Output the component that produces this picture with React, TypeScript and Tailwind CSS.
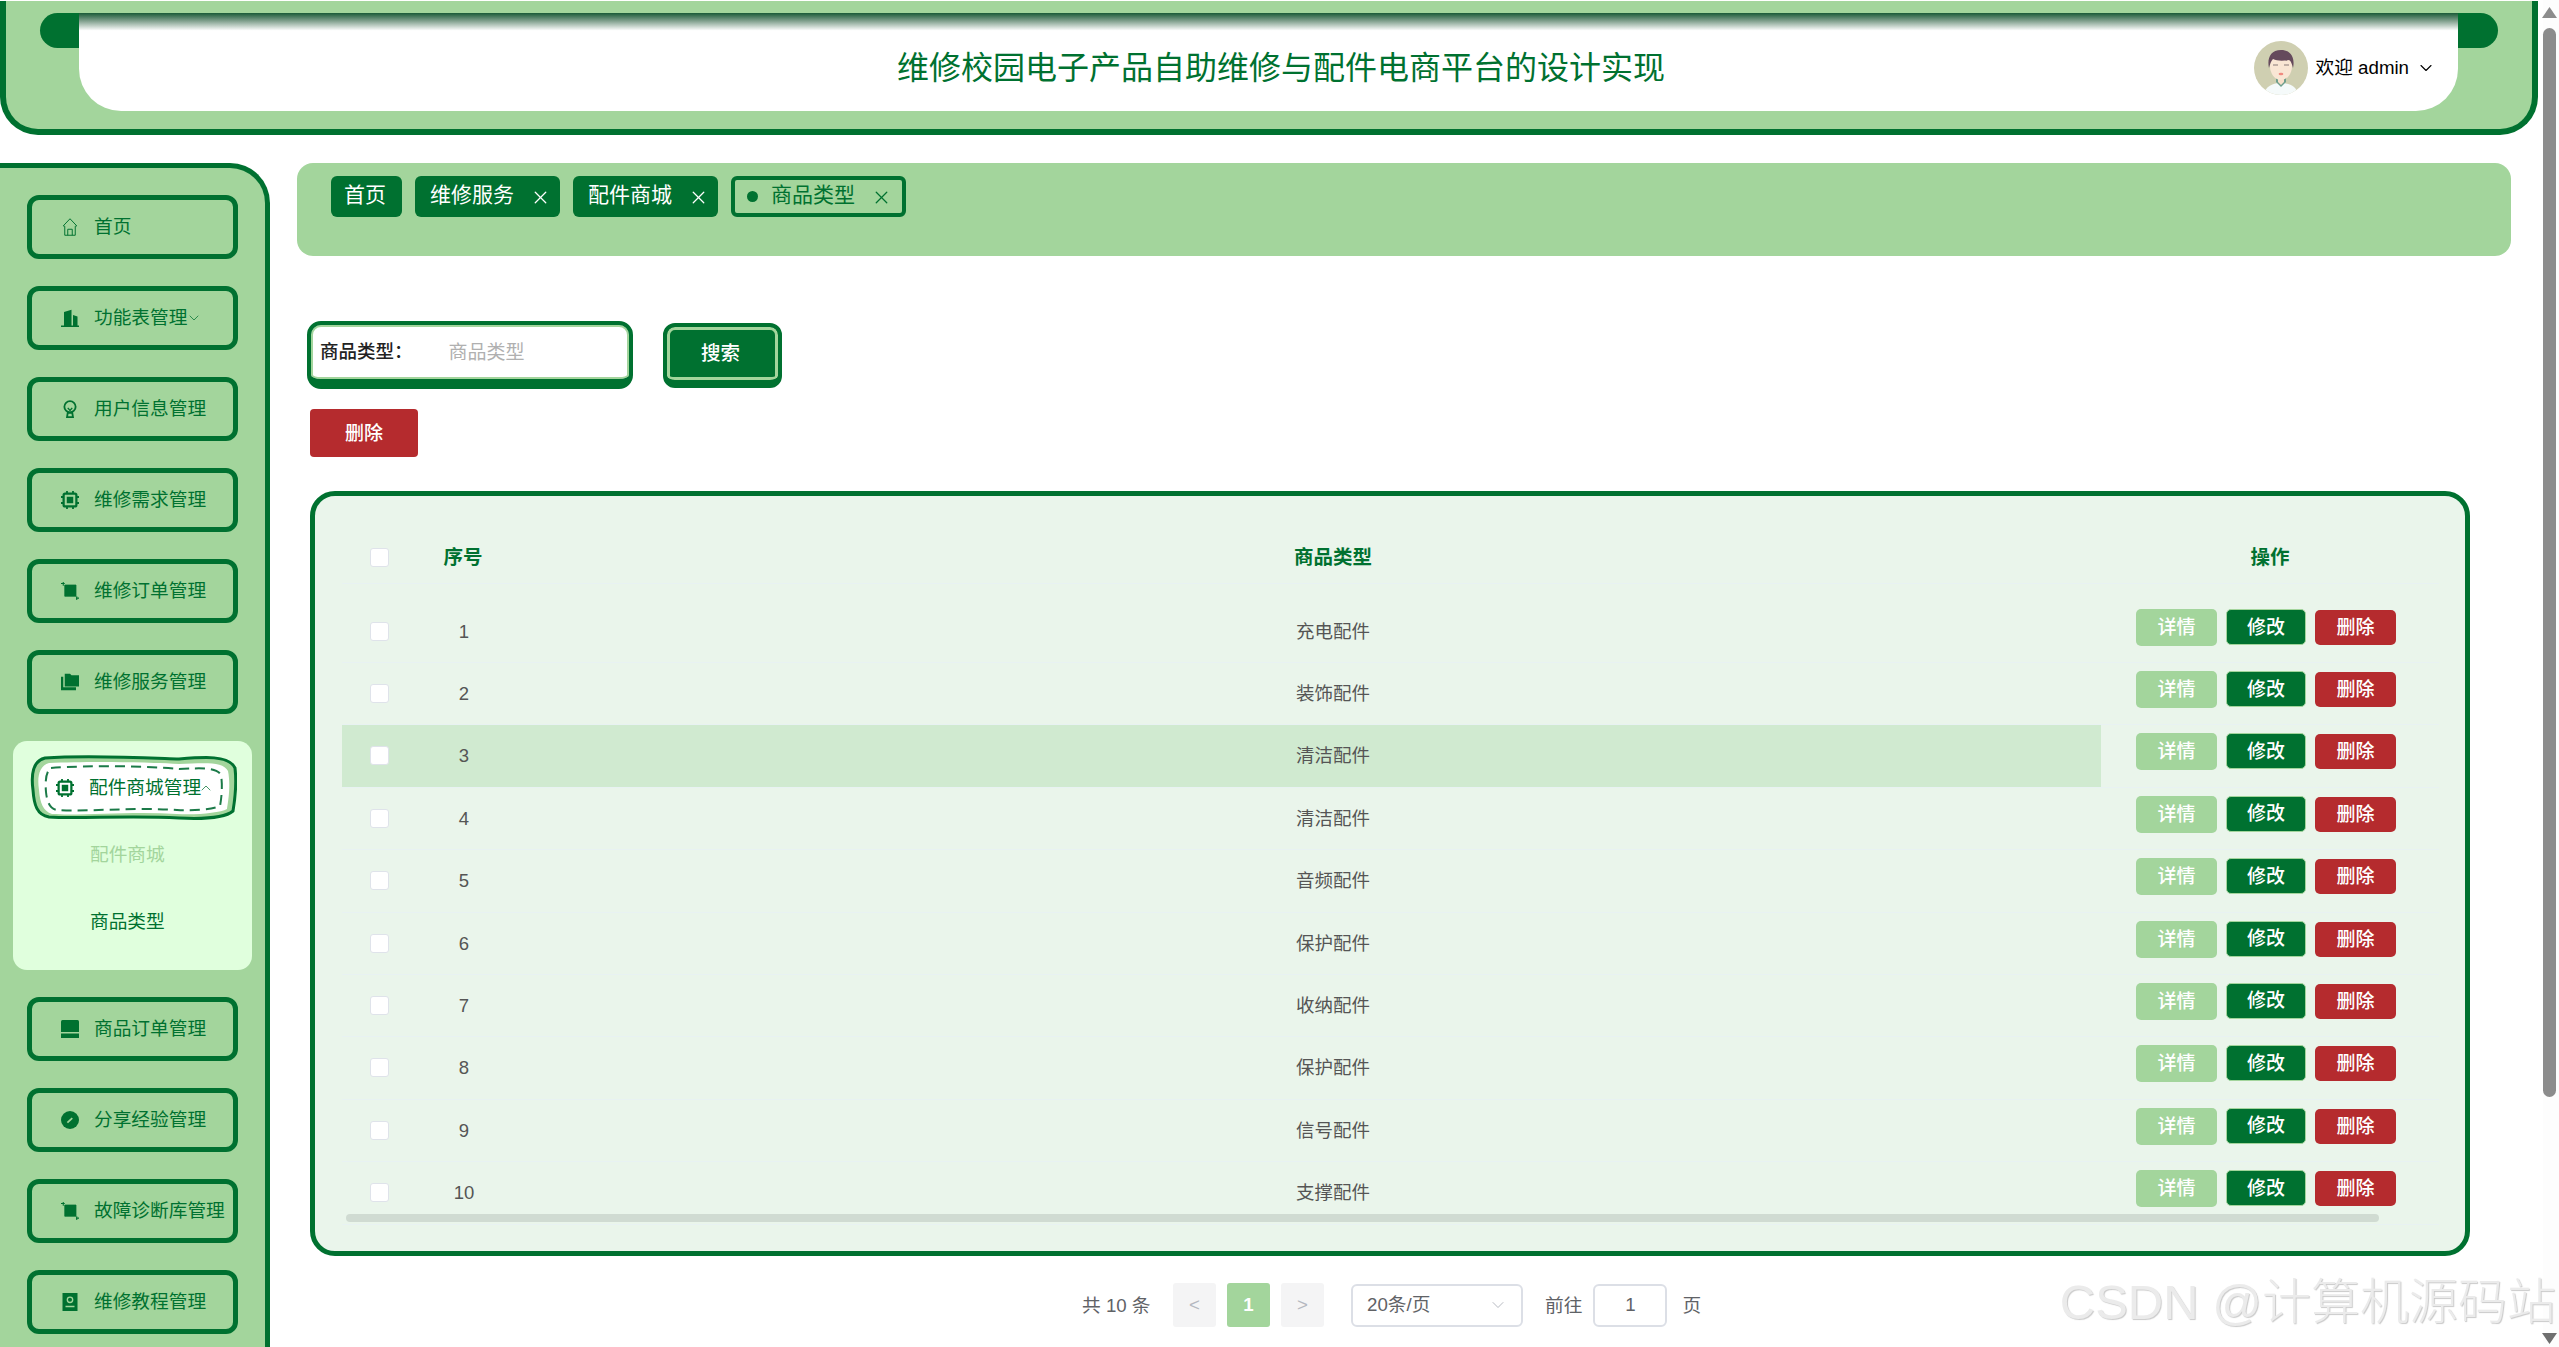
import React from "react";
import { X, ChevronDown, ChevronUp } from "lucide-react";

const G = "#007130";
const L = "#a3d59c";

type IconName = "home" | "building" | "user" | "cpu" | "crop" | "folder" | "laptop" | "compass" | "card";

function Icon({ name }: { name: IconName }) {
  const common = { width: 18, height: 18, viewBox: "0 0 24 24", className: "shrink-0" };
  switch (name) {
    case "home":
      return (
        <svg {...common} fill="none" stroke={G} strokeWidth="1.3">
          <path d="M12 1 3 10.5l2 .5v12h14V11l2-.5zM9 23v-8h6v8" />
        </svg>
      );
    case "building":
      return (
        <svg {...common} fill={G}>
          <path d="M0 24h24v-2h-2V10l-6-2v14h-2V1L4 4v18H0z" />
        </svg>
      );
    case "user":
      return (
        <svg {...common} fill="none" stroke={G} strokeWidth="2.4">
          <circle cx="12" cy="9" r="7.5" />
          <path d="M8 23h8l-1-6H9z" />
          <path d="M9 10.5 12 14l3-3.5" strokeWidth="1.8" />
        </svg>
      );
    case "cpu":
      return (
        <svg {...common} fill={G} stroke={G}>
          <rect x="3.5" y="3.5" width="17" height="17" rx="2" fill="none" strokeWidth="3" />
          <rect x="8" y="8" width="8" height="8" strokeWidth="0.6" />
          <path d="M8 0v3M16 0v3M8 21v3M16 21v3M0 8h3M0 16h3M21 8h3M21 16h3" strokeWidth="2.4" />
        </svg>
      );
    case "crop":
      return (
        <svg {...common} fill={G} stroke={G}>
          <path d="M5 4h15v15H5z" strokeWidth="1" />
          <path d="M0 2h5M3 0v5M20 21.5h4M21 19v5" strokeWidth="1.4" />
        </svg>
      );
    case "folder":
      return (
        <svg {...common} fill={G}>
          <path d="M5 1h7l2 2h10v15H5z" />
          <path d="M0 5h3v14h17v4H0z" />
        </svg>
      );
    case "laptop":
      return (
        <svg {...common} fill={G}>
          <path d="M2 0h20a2 2 0 0 1 2 2v14H0V2a2 2 0 0 1 2-2z" />
          <rect x="0" y="18" width="24" height="6" />
        </svg>
      );
    case "compass":
      return (
        <svg {...common}>
          <circle cx="12" cy="12" r="12" fill={G} />
          <path d="M8.5 15.5 15 9.5" stroke={L} strokeWidth="2.4" />
        </svg>
      );
    case "card":
      return (
        <svg {...common}>
          <rect x="2" y="0" width="20" height="24" fill={G} />
          <circle cx="12" cy="9" r="3.6" fill="none" stroke={L} strokeWidth="1.8" />
          <path d="M6 18h12" stroke={L} strokeWidth="2" />
        </svg>
      );
  }
}

function MenuItem({ icon, label, chevron }: { icon: IconName; label: string; chevron?: boolean }) {
  return (
    <div className="ml-[27px] flex h-[64px] w-[211px] items-center rounded-[12px] border-[5px] border-[#007130] pl-[29px] text-[18.7px] leading-none whitespace-nowrap text-[#007130]">
      <Icon name={icon} />
      <span className="ml-[15px]">{label}</span>
      {chevron && <ChevronDown size={16} strokeWidth={1.1} className="-ml-[1px]" />}
    </div>
  );
}

function ActiveMenu() {
  return (
    <div className="relative flex h-[66px] w-[208px] items-center">
      <svg viewBox="0 0 208 66" width="208" height="66" className="absolute inset-0">
        <path
          d="M16 3C60 0 120 3 150 4 175 2 200 0 206 13c2 17-1 37-2 43-8 7-33 8-54 7C100 60 50 64 20 62 8 60 5 50 4 35 2 20 3 6 16 3Z"
          fill="#a3d59c"
          stroke="#007130"
          strokeWidth="3"
        />
        <path d="M20 8C60 6 120 7 150 9c25-1 44-3 49 7 3 15 0 31-1 38-7 4-30 6-50 5-46-3-96 2-125 0C14 56 11 48 10 35 8 22 10 11 20 8Z" fill="#ffffff" />
        <path
          d="M22 13C60 10 120 11 150 14c22-1 38-2 42 6 2 12 0 26-1 31-7 3-25 5-43 4-42-3-92 2-120 0-7-1-10-8-11-18-1-11 0-21 5-24Z"
          fill="none"
          stroke="#1b7a48"
          strokeWidth="2"
          strokeDasharray="10 6"
        />
      </svg>
      <div className="relative flex items-center pl-[27px] text-[18.7px] leading-none whitespace-nowrap text-[#007130]">
        <Icon name="cpu" />
        <span className="ml-[15px]">配件商城管理</span>
        <ChevronUp size={16} strokeWidth={1.1} className="-ml-[3px]" />
      </div>
    </div>
  );
}

function Avatar() {
  return (
    <svg width="54" height="54" viewBox="0 0 54 54" className="shrink-0">
      <defs>
        <clipPath id="av">
          <circle cx="27" cy="27" r="27" />
        </clipPath>
      </defs>
      <g clipPath="url(#av)">
        <rect width="54" height="54" fill="#cfcfb1" />
        <path d="M10 54c1-9 9-12 17-12s16 3 17 12z" fill="#f5fafa" />
        <path d="M22 41l5 5 5-5v-5H22z" fill="#6f9f8d" />
        <path d="M24 36h6v5l-3 3-3-3z" fill="#f7dfc9" />
        <ellipse cx="27" cy="25" ry="14" rx="11" fill="#f9e6d4" />
        <path d="M15 27c-2-9 1-18 12-18s14 9 12 18c-1-4-2-7-4-8-6 1-12 1-16-1-2 2-3 5-4 9z" fill="#654a5c" />
        <path d="M19 24h5M30 24h5" stroke="#8a7a78" strokeWidth="1.2" />
        <ellipse cx="27" cy="33" rx="2.4" ry="1.2" fill="#f08a80" />
      </g>
    </svg>
  );
}

function Tab({ label, closable, active, w }: { label: string; closable?: boolean; active?: boolean; w: string }) {
  return (
    <div
      className={`flex h-[41px] items-center rounded-[6px] pb-[4px] text-[21px] leading-none whitespace-nowrap ${w} ${
        active ? "border-[4px] border-[#007130] pl-[12px] text-[#007130]" : closable ? "bg-[#007130] pl-[15px] text-white" : "bg-[#007130] pl-[13px] text-white"
      }`}
    >
      {active && <span className="mt-[4px] mr-[13px] h-[11px] w-[11px] rounded-full bg-[#007130]" />}
      <span>{label}</span>
      {closable && <X size={21} strokeWidth={1.5} className="mt-[6px] ml-[16px]" />}
    </div>
  );
}

const rows = ["充电配件", "装饰配件", "清洁配件", "清洁配件", "音频配件", "保护配件", "收纳配件", "保护配件", "信号配件", "支撑配件"];

function Check() {
  return <span className="block h-[19px] w-[19px] shrink-0 rounded-[3px] border border-[#dfe3ea] bg-white" />;
}

function Row({ n, text }: { n: number; text: string }) {
  const first = n === 1;
  const hl = n === 3;
  return (
    <div className={`flex border-b border-[#e8f2f2] ${first ? "h-[79px]" : "h-[62.4px]"}`}>
      <div className={`flex w-[1759px] ${first ? "pt-[17px]" : ""} ${hl ? "bg-[#d0ead0]" : ""}`}>
        <div className="w-[73px] pt-[21px] pl-[28px]">
          <Check />
        </div>
        <div className="w-[98px] pt-[20px] text-center text-[18.5px] leading-[22px] text-[#555]">{n}</div>
        <div className="w-[1588px] pt-[20px] pl-[52px] text-center text-[18.5px] leading-[22px] text-[#555]">{text}</div>
      </div>
      <div className={`flex w-[338px] items-start gap-[9px] pl-[35px] ${first ? "pt-[25px]" : "pt-[8px]"}`}>
        <button className="h-[37px] w-[81px] rounded-[5px] bg-[#a3d59c] text-[19px] leading-none font-medium text-white">详情</button>
        <button className="h-[36px] w-[80px] rounded-[5px] border border-[#a3d59c] bg-[#007130] text-[19px] leading-none font-medium text-white">修改</button>
        <button className="mt-[1px] h-[35px] w-[81px] rounded-[5px] bg-[#b52b2e] text-[19px] leading-none font-medium text-white">删除</button>
      </div>
    </div>
  );
}

export default function App() {
  return (
    <div className="relative flex h-[1347px] w-[2559px] overflow-hidden bg-white font-['Liberation_Sans','Noto_Sans_CJK_SC',sans-serif]">
      <div className="w-[2543px] shrink-0">
        {/* header */}
        <header className="relative mt-[1px] h-[134px] w-[2538px] rounded-b-[38px] border-x-[6px] border-b-[6px] border-[#007130] bg-[#a3d59c] pt-[12px] pl-[73px]">
          <div className="absolute top-[12px] left-[34px] h-[35px] w-[2458px] rounded-full bg-[#007130]" />
          <div className="relative flex h-[98px] w-[2379px] items-center rounded-b-[42px] bg-white bg-[linear-gradient(#1a5a38_0%,#7f9f8c_8%,#ffffff_18%)] pt-[12px] pl-[818px]">
            <h1 className="text-[32px] leading-none font-normal whitespace-nowrap text-[#007130]">维修校园电子产品自助维修与配件电商平台的设计实现</h1>
            <div className="ml-auto flex items-center pr-[22px] text-black">
              <Avatar />
              <span className="ml-[8px] text-[18.7px] leading-none whitespace-nowrap">欢迎 admin</span>
              <ChevronDown size={20} strokeWidth={1.3} className="ml-[7px]" />
            </div>
          </div>
        </header>

        <div className="mt-[28px] flex">
          {/* sidebar */}
          <aside className="h-[1184px] w-[270px] shrink-0 rounded-tr-[40px] border-t-[5px] border-r-[5px] border-[#007130] bg-[#a3d59c] pt-[27px]">
            <div className="flex flex-col gap-[27px]">
              <MenuItem icon="home" label="首页" />
              <MenuItem icon="building" label="功能表管理" chevron />
              <MenuItem icon="user" label="用户信息管理" />
              <MenuItem icon="cpu" label="维修需求管理" />
              <MenuItem icon="crop" label="维修订单管理" />
              <MenuItem icon="folder" label="维修服务管理" />
            </div>
            <div className="mt-[27px] ml-[13px] h-[229px] w-[239px] rounded-[14px] bg-[#e0ffdd] pt-[14px] pl-[16px] text-[18.7px] leading-none">
              <ActiveMenu />
              <div className="mt-[25px] pl-[61px] text-[#a3d59c]">配件商城</div>
              <div className="mt-[48px] pl-[61px] text-[#007130]">商品类型</div>
            </div>
            <div className="mt-[27px] flex flex-col gap-[27px]">
              <MenuItem icon="laptop" label="商品订单管理" />
              <MenuItem icon="compass" label="分享经验管理" />
              <MenuItem icon="crop" label="故障诊断库管理" />
              <MenuItem icon="card" label="维修教程管理" />
            </div>
          </aside>

          {/* main */}
          <main className="ml-[27px] w-[2214px] shrink-0">
            <div className="flex h-[93px] items-start gap-[13px] rounded-[16px] bg-[#a3d59c] pt-[13px] pl-[34px]">
              <Tab label="首页" w="w-[71px]" />
              <Tab label="维修服务" closable w="w-[145px]" />
              <Tab label="配件商城" closable w="w-[145px]" />
              <Tab label="商品类型" closable active w="w-[175px]" />
            </div>

            <div className="mt-[65px] ml-[10px] flex items-start">
              <div className="flex h-[68px] w-[326px] items-center rounded-[14px] border-x-[4px] border-t-[4px] border-b-[10px] border-[#007130] bg-white pl-[9px] shadow-[inset_0_0_0_2px_#a3d59c]">
                <span className="text-[18.5px] leading-none font-medium whitespace-nowrap text-[#222]">商品类型：</span>
                <span className="ml-[36px] text-[19px] leading-none whitespace-nowrap text-[#b0b0b0]">商品类型</span>
              </div>
              <button className="mt-[2px] ml-[30px] h-[65px] w-[119px] rounded-[12px] border-x-[4px] border-t-[4px] border-b-[8px] border-[#007130] bg-[#007130] pr-[4px] text-[19.5px] leading-none font-medium text-white shadow-[inset_0_0_0_3px_#a3d59c]">
                搜索
              </button>
            </div>

            <button className="mt-[20px] ml-[13px] block h-[48px] w-[108px] rounded-[4px] bg-[#b52b2e] text-[19px] leading-none font-medium text-white">删除</button>

            <div className="relative mt-[34px] ml-[13px] h-[765px] w-[2160px] rounded-[25px] border-[5px] border-[#007130] bg-[#eaf5eb] pl-[27px]">
              <div className="w-[2097px]">
                <div className="flex h-[88px] items-center border-b border-[#e8f2f2] pt-[36px] text-[19.5px] leading-none font-semibold text-[#007130]">
                  <div className="w-[73px] pl-[28px]">
                    <Check />
                  </div>
                  <div className="w-[96px] text-center">序号</div>
                  <div className="w-[1590px] pl-[54px] text-center">商品类型</div>
                  <div className="w-[338px] text-center">操作</div>
                </div>
                {rows.map((t, i) => (
                  <Row key={i} n={i + 1} text={t} />
                ))}
              </div>
              <div className="absolute top-[718px] left-[31px] h-[8px] w-[2033px] rounded-full bg-[#d0dbd2]" />
            </div>

            <div className="mt-[27px] flex items-center pl-[785px] text-[18.7px] leading-none whitespace-nowrap text-[#606266]">
              <span className="w-[91px] pt-[3px]">共 10 条</span>
              <span className="flex h-[44px] w-[43px] items-center justify-center rounded-[3px] bg-[#f4f4f5] text-[#b4b8c0]">&lt;</span>
              <span className="ml-[11px] flex h-[44px] w-[43px] items-center justify-center rounded-[3px] bg-[#a3d59c] font-bold text-white">1</span>
              <span className="ml-[11px] flex h-[44px] w-[43px] items-center justify-center rounded-[3px] bg-[#f4f4f5] text-[#b4b8c0]">&gt;</span>
              <span className="ml-[27px] flex h-[43px] w-[172px] items-center justify-between rounded-[6px] border-2 border-[#dcdfe6] pr-[13px] pl-[14px]">
                20条/页
                <ChevronDown size={20} strokeWidth={1} className="text-[#a8acb4]" />
              </span>
              <span className="ml-[22px] pt-[3px]">前往</span>
              <span className="ml-[11px] flex h-[43px] w-[74px] items-center justify-center rounded-[6px] border-2 border-[#dcdfe6]">1</span>
              <span className="ml-[15px] pt-[3px]">页</span>
            </div>
          </main>
        </div>
      </div>

      {/* window scrollbar */}
      <div className="flex h-[1347px] w-[16px] flex-col bg-[#fdfdfd]">
        <svg width="15" height="11" viewBox="0 0 15 11" className="mt-[7px] -ml-[1px]">
          <path d="M7.5 0 15 11H0z" fill="#8c8c8c" />
        </svg>
        <div className="mt-[10px] h-[1069px] w-[13px] rounded-[6.5px] bg-[#8c8c8c]" />
        <svg width="15" height="11" viewBox="0 0 15 11" className="mt-auto mb-[3px] -ml-[1px]">
          <path d="M7.5 11 15 0H0z" fill="#6f6f6f" />
        </svg>
      </div>

      {/* watermark */}
      <div className="absolute top-[1278px] right-[3px] text-[49px] leading-none font-light whitespace-nowrap text-[#ebebeb] [text-shadow:1px_1px_1px_#cacaca]">
        CSDN @计算机源码站
      </div>
    </div>
  );
}
